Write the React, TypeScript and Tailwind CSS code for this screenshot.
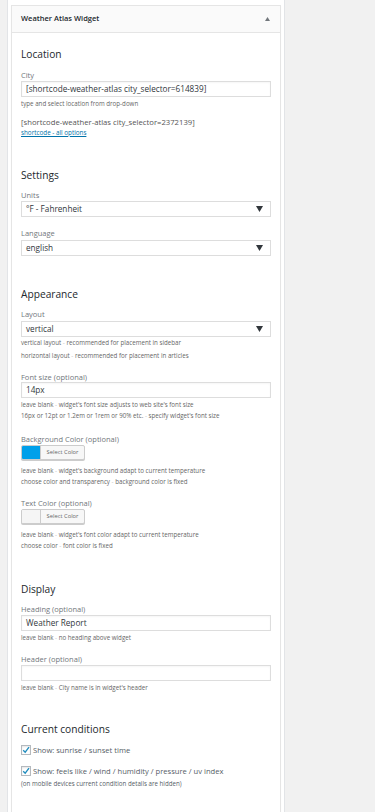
import React from "react";

const font = { fontFamily: '"Open Sans", "Noto Sans", sans-serif' };

function Hint({ a, b, mt }: { a: string; b?: string; mt: string }) {
  return (
    <div className={`${mt} h-[8px] leading-[8px] text-[6.2px] text-[#666] whitespace-nowrap`}>
      {a}
      {b !== undefined && (
        <>
          <span className="text-[#c8c8c8]"> - </span>
          {b}
        </>
      )}
    </div>
  );
}

function Label({ text, mt }: { text: string; mt: string }) {
  return (
    <div className={`${mt} h-[10px] leading-[10px] text-[7.5px] text-[#72777c] whitespace-nowrap`}>{text}</div>
  );
}

function Heading({ text, mt }: { text: string; mt: string }) {
  return (
    <div className={`${mt} h-[14px] leading-[14px] text-[10.2px] text-[#23282d] whitespace-nowrap`}>{text}</div>
  );
}

function Input({ value, mt }: { value: string; mt: string }) {
  return (
    <div
      className={`${mt} h-[16px] w-[250px] border border-[#ddd] bg-white pl-[4px] flex items-center text-[8.2px] text-[#32373c] whitespace-nowrap shadow-[inset_0_1px_2px_rgba(0,0,0,0.04)]`}
    >
      {value}
    </div>
  );
}

function Select({ value, mt }: { value: string; mt: string }) {
  return (
    <div
      className={`${mt} h-[16px] w-[250px] border border-[#ddd] bg-white pl-[4px] pr-[7px] flex items-center justify-between text-[8.2px] text-[#32373c] whitespace-nowrap`}
    >
      <span>{value}</span>
      <svg width="7" height="6" viewBox="0 0 7 6">
        <path d="M0 0 L7 0 L3.5 6 Z" fill="#32373c" />
      </svg>
    </div>
  );
}

function ColorButton({ color, mt }: { color: string; mt: string }) {
  return (
    <div
      className={`${mt} h-[15px] w-[64px] flex border border-[#ccc] rounded-[2px] overflow-hidden shadow-[0_1px_0_#ccc] bg-[#f7f7f7]`}
    >
      <div className="w-[19px] h-full border-r border-[#ccc]" style={{ background: color }} />
      <div className="flex-1 flex items-center justify-center text-[5.8px] text-[#666]">Select Color</div>
    </div>
  );
}

function Check({ text, mt }: { text: string; mt: string }) {
  return (
    <div className={`${mt} h-[10px] flex items-center gap-[2px] whitespace-nowrap`}>
      <div className="w-[10px] h-[10px] border border-[#b4b9be] bg-white flex items-center justify-center shadow-[inset_0_1px_2px_rgba(0,0,0,0.1)]">
        <svg width="8" height="8" viewBox="0 0 8 8">
          <path d="M1.2 4.2 L3.2 6.2 L7 1.2" stroke="#1e8cbe" strokeWidth="1.3" fill="none" />
        </svg>
      </div>
      <span className="text-[7.6px] text-[#555d66] leading-[10px]">{text}</span>
    </div>
  );
}

export default function App() {
  return (
    <div className="w-[375px] h-[812px] bg-[#f1f1f1] overflow-hidden" style={font}>
      <div className="ml-[7px] w-[278px] h-[812px] bg-white border-l border-r border-[#e2e4e7] pl-[3px] pt-[5px]">
        <div className="w-[270px] border border-[#e5e5e5] shadow-[0_1px_1px_rgba(0,0,0,0.04)] bg-white">
          <div className="h-[27px] bg-[#fafafa] border-b border-[#e5e5e5] flex items-center justify-between pl-[9px] pr-[10px]">
            <span className="text-[7.5px] font-semibold text-[#23282d] whitespace-nowrap">Weather Atlas Widget</span>
            <svg width="5" height="4" viewBox="0 0 5 4">
              <path d="M0 4 L2.5 0 L5 4 Z" fill="#72777c" />
            </svg>
          </div>
          <div className="pl-[9px] pb-[60px]">
            <Heading text="Location" mt="mt-[14px]" />
            <Label text="City" mt="mt-[9px]" />
            <Input value="[shortcode-weather-atlas city_selector=614839]" mt="mt-[1px]" />
            <Hint a="type and select location from drop-down" mt="mt-[3px]" />
            <div className="mt-[10px] h-[9px] leading-[9px] text-[7.7px] text-[#555] whitespace-nowrap">
              [shortcode-weather-atlas city_selector=2372139]
            </div>
            <div className="mt-[1px] h-[9px] leading-[9px] text-[6.3px] text-[#0073aa] underline whitespace-nowrap">
              shortcode - all options
            </div>

            <Heading text="Settings" mt="mt-[31px]" />
            <Label text="Units" mt="mt-[8px]" />
            <Select value="°F - Fahrenheit" mt="mt-[1px]" />
            <Label text="Language" mt="mt-[11px]" />
            <Select value="english" mt="mt-[2px]" />

            <Heading text="Appearance" mt="mt-[31px]" />
            <Label text="Layout" mt="mt-[8px]" />
            <Select value="vertical" mt="mt-[2px]" />
            <Hint a="vertical layout" b="recommended for placement in sidebar" mt="mt-[2px]" />
            <Hint a="horizontal layout" b="recommended for placement in articles" mt="mt-[5px]" />
            <Label text="Font size (optional)" mt="mt-[12px]" />
            <Input value="14px" mt="mt-[0px]" />
            <Hint a="leave blank" b="widget's font size adjusts to web site's font size" mt="mt-[3px]" />
            <Hint a="16px or 12pt or 1.2em or 1rem or 90% etc." b="specify widget's font size" mt="mt-[3px]" />
            <Label text="Background Color (optional)" mt="mt-[14px]" />
            <ColorButton color="#00a0ea" mt="mt-[1px]" />
            <Hint a="leave blank" b="widget's background adapt to current temperature" mt="mt-[7px]" />
            <Hint a="choose color and transparency" b="background color is fixed" mt="mt-[3px]" />
            <Label text="Text Color (optional)" mt="mt-[12px]" />
            <ColorButton color="#f5f5f5" mt="mt-[1px]" />
            <Hint a="leave blank" b="widget's font color adapt to current temperature" mt="mt-[7px]" />
            <Hint a="choose color" b="font color is fixed" mt="mt-[3px]" />

            <Heading text="Display" mt="mt-[32px]" />
            <Label text="Heading (optional)" mt="mt-[8px]" />
            <Input value="Weather Report" mt="mt-[1px]" />
            <Hint a="leave blank" b="no heading above widget" mt="mt-[3px]" />
            <Label text="Header (optional)" mt="mt-[12px]" />
            <Input value="" mt="mt-[1px]" />
            <Hint a="leave blank" b="City name is in widget's header" mt="mt-[3px]" />

            <Heading text="Current conditions" mt="mt-[30px]" />
            <Check text="Show: sunrise / sunset time" mt="mt-[9px]" />
            <Check text="Show: feels like / wind / humidity / pressure / uv index" mt="mt-[11px]" />
            <div className="mt-[4px] h-[8px] leading-[8px] text-[6.2px] text-[#555d66] whitespace-nowrap">
              (on mobile devices current condition details are hidden)
            </div>
          </div>
        </div>
      </div>
    </div>
  );
}
